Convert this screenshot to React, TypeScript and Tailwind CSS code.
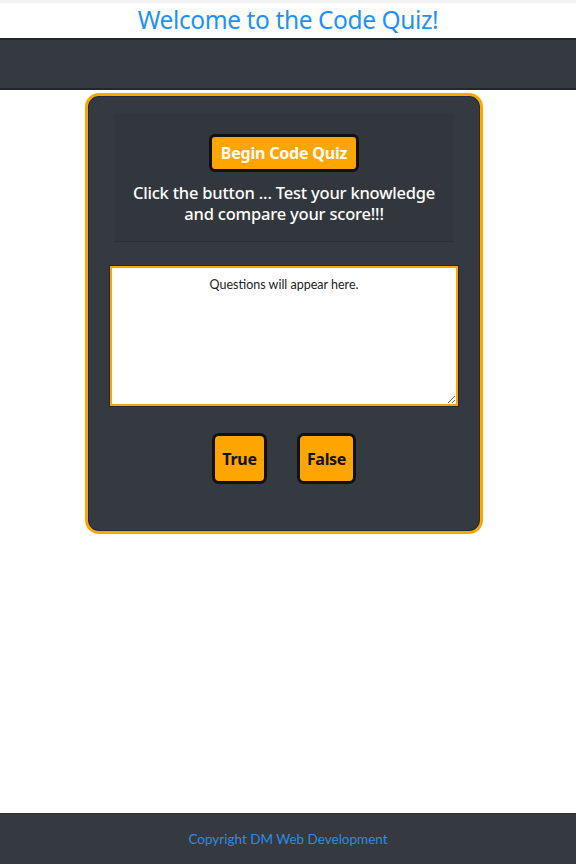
import React from "react";

const ubuntu = { fontFamily: '"Noto Sans", "Open Sans", sans-serif' };
const segoe = { fontFamily: 'Lato, "Open Sans", sans-serif' };

const App = () => {
  return (
    <div className="min-h-[864px] flex flex-col bg-white" style={ubuntu}>
      {/* Header */}
      <header className="border-t-[3px] border-[#f3f3f3] h-[38px] flex items-center justify-center">
        <h1 className="text-[24.5px] leading-none text-[#1e90ff] tracking-[-0.4px]">
          Welcome to the Code Quiz!
        </h1>
      </header>
      <nav className="h-[52px] bg-[#343a40] border-y-2 border-[#23272b]" />

      {/* Quiz card */}
      <main className="flex-1 flex justify-center pt-[3px] pr-[8px]">
        <div className="w-[398px] h-[441px] rounded-[14px] border-[3px] border-[#ffa500] bg-[#343a40] shadow-[inset_0_0_0_1px_#1f2a44] px-[22px] pt-[17px]">
          <div className="mx-[5px] h-[129px] bg-[#32373d] border-b border-[#2c3035] flex flex-col items-center pt-[21px]">
            <button className="h-[38px] px-[9px] rounded-[6px] border-[3px] border-[#111] bg-[#ffa500] text-white font-bold text-[16px] leading-none tracking-[-0.2px]">
              Begin Code Quiz
            </button>
            <p className="mt-[10px] text-white text-[16.5px] leading-[21px] text-center font-medium tracking-[-0.2px]">
              Click the button ... Test your knowledge
              <br />
              and compare your score!!!
            </p>
          </div>

          <textarea
            readOnly
            className="mt-[24px] block w-full h-[140px] bg-white border-2 border-[#ffa500] shadow-[0_0_0_1px_#1f2a44] text-center text-[12.5px] text-[#222] pt-[8px] outline-none"
            style={segoe}
            value="Questions will appear here."
          />

          <div className="mt-[27px] flex justify-center gap-[30px]">
            <button className="w-[55px] h-[51px] rounded-[7px] border-[3px] border-[#111] bg-[#ffa500] text-[#111] font-bold text-[16px] tracking-[-0.3px]">
              True
            </button>
            <button className="w-[59px] h-[51px] rounded-[7px] border-[3px] border-[#111] bg-[#ffa500] text-[#111] font-bold text-[16px] tracking-[-0.3px]">
              False
            </button>
          </div>
        </div>
      </main>

      {/* Footer */}
      <footer className="h-[51px] bg-[#343a40] border-t border-[#2a2e33] flex items-center justify-center">
        <span className="text-[13.5px] text-[#2f8ae6]" style={segoe}>
          Copyright DM Web Development
        </span>
      </footer>
    </div>
  );
};

export default App;
